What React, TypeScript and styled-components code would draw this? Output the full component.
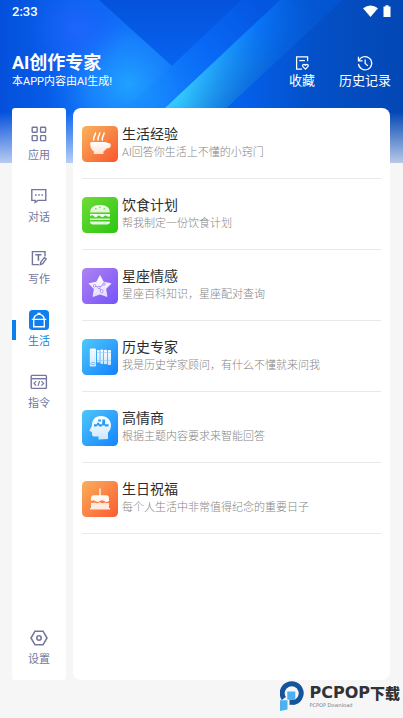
import React, { useState } from "react";
import styled, { createGlobalStyle } from "styled-components";

const GlobalStyle = createGlobalStyle`
  * { box-sizing: border-box; }
  body {
    margin: 0;
    background: #f6f6f7;
    font-family: Roboto, "Noto Sans CJK SC", sans-serif;
  }
  button { font: inherit; border: 0; padding: 0; background: none; cursor: pointer; }
`;

const Page = styled.div`
  position: relative;
  display: flex;
  flex-direction: column;
  min-height: 100vh;
`;

const Backdrop = styled.svg`
  position: absolute;
  inset: 0 0 auto 0;
  width: 100%;
  height: 163px;
  z-index: -1;
`;

const StatusBar = styled.div`
  display: flex;
  justify-content: space-between;
  align-items: center;
  height: 22px;
  padding: 0 12px;
  color: #fff;
  font-size: 13px;
  font-weight: 500;
`;

const StatusIcons = styled.div`
  display: flex;
  align-items: center;
  gap: 5px;
`;

const Header = styled.header`
  display: flex;
  justify-content: space-between;
  align-items: flex-end;
  height: 86px;
  padding: 0 12px 17px;
  color: #fff;
`;

const Title = styled.h1`
  margin: 0;
  font-size: 18px;
  line-height: 20px;
  font-weight: 700;
`;

const Tagline = styled.p`
  margin: 0;
  font-size: 11px;
  line-height: 18px;
`;

const Actions = styled.div`
  display: flex;
  gap: 24px;
  padding-bottom: 1px;
`;

const ActionButton = styled.button`
  display: flex;
  flex-direction: column;
  align-items: center;
  color: #fff;
  font-size: 13px;
  line-height: 18px;
`;

const Main = styled.main`
  flex: 1;
  display: flex;
  gap: 7px;
  padding: 0 13px 0 12px;
`;

const Sidebar = styled.nav`
  display: flex;
  flex-direction: column;
  flex: 0 0 54px;
  padding: 5px 0 1px;
  border-radius: 3px;
  background: #fff;
`;

const Spacer = styled.div`
  flex: 1;
`;

const NavButton = styled.button<{ $active?: boolean }>`
  position: relative;
  display: flex;
  flex-direction: column;
  align-items: center;
  justify-content: center;
  gap: 4px;
  height: 62px;
  color: ${(p) => (p.$active ? "#1283ee" : "#74779b")};
  font-size: 11px;
  line-height: 16px;

  &::before {
    content: "";
    display: ${(p) => (p.$active ? "block" : "none")};
    position: absolute;
    left: 0;
    width: 4px;
    height: 20px;
    background: #0f7ff0;
  }
`;

const Card = styled.section`
  flex: 1;
  min-width: 0;
  padding: 0 9px;
  border-radius: 8px;
  background: #fff;
`;

const List = styled.ul`
  list-style: none;
  margin: 0;
  padding: 0;
`;

const Item = styled.li`
  border-bottom: 1px solid #e9e9eb;
`;

const ItemButton = styled.button`
  display: flex;
  align-items: center;
  gap: 4px;
  width: 100%;
  height: 70px;
  padding-top: 2px;
  text-align: left;
`;

const Texts = styled.span`
  display: flex;
  flex-direction: column;
  gap: 1px;
  min-width: 0;
  padding-bottom: 3px;
`;

const ItemTitle = styled.span`
  font-size: 14px;
  line-height: 20px;
  color: #2c2c2c;
`;

const ItemNote = styled.span`
  font-size: 11px;
  line-height: 16px;
  font-weight: 300;
  color: #858585;
`;

const Footer = styled.footer`
  display: flex;
  justify-content: flex-end;
  align-items: center;
  gap: 2px;
  height: 38px;
  padding: 0 3px 6px 0;
`;

const Brand = styled.div`
  display: flex;
  flex-direction: column;
`;

const BrandName = styled.span`
  display: flex;
  align-items: center;
  color: #303236;
  font: 700 16px/18px "DejaVu Sans", sans-serif;
`;

const BrandHan = styled.span`
  font: 900 15px/18px "Noto Sans CJK SC", sans-serif;
`;

const BrandNote = styled.span`
  color: #77797d;
  font: 5px/6px "DejaVu Sans", sans-serif;
`;

const HeaderArt = () => (
  <Backdrop viewBox="0 0 403 163" preserveAspectRatio="none" aria-hidden="true">
    <defs>
      <linearGradient id="base" x1="0" y1="0" x2="1" y2="0">
        <stop offset="0" stopColor="#0450dc" />
        <stop offset=".3" stopColor="#0a6df5" />
        <stop offset=".6" stopColor="#0560ea" />
        <stop offset=".78" stopColor="#0350c8" />
        <stop offset="1" stopColor="#0347b4" />
      </linearGradient>
      <radialGradient id="glow" gradientUnits="userSpaceOnUse" cx="128" cy="84" r="88">
        <stop offset="0" stopColor="#20a2ff" />
        <stop offset=".5" stopColor="#1c86ff" stopOpacity=".75" />
        <stop offset="1" stopColor="#0a60f0" stopOpacity="0" />
      </radialGradient>
      <radialGradient id="violet" gradientUnits="userSpaceOnUse" cx="76" cy="28" r="50">
        <stop offset="0" stopColor="#2366ff" stopOpacity=".8" />
        <stop offset="1" stopColor="#2060ff" stopOpacity="0" />
      </radialGradient>
      <linearGradient id="wedge" x1="0" y1="0" x2="0" y2="1">
        <stop offset="0" stopColor="#0452dc" />
        <stop offset="1" stopColor="#0764f0" />
      </linearGradient>
      <linearGradient id="strip" gradientUnits="userSpaceOnUse" x1="260" y1="0" x2="150" y2="100">
        <stop offset="0" stopColor="#0455df" />
        <stop offset=".5" stopColor="#0869f6" />
        <stop offset="1" stopColor="#148cff" stopOpacity=".4" />
      </linearGradient>
      <linearGradient id="beam" gradientUnits="userSpaceOnUse" x1="310" y1="0" x2="190" y2="110">
        <stop offset="0" stopColor="#0358d8" />
        <stop offset=".35" stopColor="#0a78fa" />
        <stop offset="1" stopColor="#35ccff" />
      </linearGradient>
      <linearGradient id="beamEdge" gradientUnits="userSpaceOnUse" x1="225" y1="50" x2="262" y2="88">
        <stop offset="0" stopColor="#0450c8" stopOpacity="0" />
        <stop offset="1" stopColor="#0452cc" stopOpacity=".75" />
      </linearGradient>
      <linearGradient id="fade" x1="0" y1="0" x2="0" y2="1">
        <stop offset="0" stopColor="#f6f6f7" stopOpacity="0" />
        <stop offset="1" stopColor="#f6f6f7" stopOpacity=".74" />
      </linearGradient>
    </defs>
    <rect width="403" height="163" fill="url(#base)" />
    <rect width="260" height="163" fill="url(#glow)" />
    <rect width="140" height="90" fill="url(#violet)" />
    <path d="M99 0 172 66 242 0Z" fill="url(#wedge)" />
    <path d="M242 0h38L165 108 108 163V126Z" fill="url(#strip)" />
    <path d="M280 0h62L226 108l-58 55h-62l59-55Z" fill="url(#beam)" />
    <path d="M280 0h62L226 108l-58 55h-62l59-55Z" fill="url(#beamEdge)" />
    <rect y="112" width="403" height="51" fill="url(#fade)" />
  </Backdrop>
);

type IconProps = { children: React.ReactNode; size?: number };
const LineIcon = ({ children, size = 20 }: IconProps) => (
  <svg width={size} height={size} viewBox="0 0 20 20" fill="none" stroke="currentColor" strokeWidth="1.4" aria-hidden="true">
    {children}
  </svg>
);

const navItems = [
  {
    label: "应用",
    icon: (
      <LineIcon>
        <rect x="3.2" y="3.2" width="5" height="5" rx=".6" />
        <rect x="11.6" y="3.2" width="5" height="5" rx=".6" />
        <rect x="3.2" y="11.6" width="5" height="5" rx=".6" />
        <rect x="11.6" y="11.6" width="5" height="5" rx=".6" />
      </LineIcon>
    ),
  },
  {
    label: "对话",
    icon: (
      <LineIcon>
        <path d="M2.8 3.6h14v10.8h-8l-2.6 2v-2H2.8Z" />
        <path d="M6 9h1.6M9.2 9h1.6M12.4 9H14" strokeWidth="1.7" />
      </LineIcon>
    ),
  },
  {
    label: "写作",
    icon: (
      <LineIcon>
        <path d="M16 8.4V3.6H3.4v13H10" />
        <path d="M6.3 6.8h6.2M9.4 6.8v6" strokeWidth="1.6" />
        <path d="m11.8 14.2 3.5-4.6 1.9 1.4-3.5 4.7-2.4 1Z" />
      </LineIcon>
    ),
  },
  {
    label: "生活",
    icon: (
      <LineIcon>
        <rect width="20" height="20" rx="3.5" fill="#0f7ff0" stroke="none" />
        <path d="M4.8 9.4a5.2 5 0 0 1 10.4 0M2.8 9.4h14.400M4.700 9.400v7.400h10.600V9.400M8.400 3.400h3.200" stroke="#fff" />
      </LineIcon>
    ),
  },
  {
    label: "指令",
    icon: (
      <LineIcon>
        <rect x="2.2" y="3.4" width="15.2" height="13" rx=".8" />
        <path d="M2.2 6.7h15.2" />
        <path d="M7.2 9.2 5 11.4l2.2 2.2M12.4 9.2l2.2 2.2-2.2 2.2M10.5 9l-1.4 4.8" strokeWidth="1.2" />
      </LineIcon>
    ),
  },
];

type TileProps = { id: string; from: string; to: string; children: React.ReactNode };
const Tile = ({ id, from, to, children }: TileProps) => (
  <svg width="36" height="36" viewBox="0 0 36 36" aria-hidden="true">
    <defs>
      <linearGradient id={id} x1="0" y1="0" x2="1" y2="1">
        <stop offset="0" stopColor={from} />
        <stop offset="1" stopColor={to} />
      </linearGradient>
      <linearGradient id="shine" x1="0" y1="0" x2="0" y2="1">
        <stop offset="0" stopColor="#fff" />
        <stop offset="1" stopColor="#fff" stopOpacity=".76" />
      </linearGradient>
    </defs>
    <rect width="36" height="36" rx="4.5" fill={`url(#${id})`} />
    {children}
  </svg>
);

const topics = [
  {
    title: "生活经验",
    note: "AI回答你生活上不懂的小窍门",
    tile: (
      <Tile id="orange" from="#f9b45d" to="#f8562c">
        <path d="M8.2 17.2Q8.2 16 10 16h13q2 0 2.200 1 3.600-.6 3.600 2.300 0 3.300-4.400 3.300-1 2-3 3v2.500h-9.600v-2.500Q8.200 23 8.200 17.200Z" fill="url(#shine)" />
        <path d="M13.500 7q-.2 1.500-1.100 3.200T11.700 14M17.800 7q-.2 1.500-1.100 3.200T16 14M22.100 7q-.2 1.500-1.100 3.200T20.300 14" fill="none" stroke="#fff" strokeWidth="1.5" strokeLinecap="round" />
      </Tile>
    ),
  },
  {
    title: "饮食计划",
    note: "帮我制定一份饮食计划",
    tile: (
      <Tile id="green" from="#6fdc36" to="#2cc512">
        <path d="M8 15.500q0-7.500 10-7.500t10 7.500Z" fill="url(#shine)" />
        <path d="M8 17h20v2.200q-1.400 1.300-3 0t-3.200.2-3.300-.2-3.300.2-3.300-.2-3.900 0Z" fill="#fff" fillOpacity=".9" />
        <path d="M8 21.600h20V23H8ZM8 24.400h20q0 3-3 3H11q-3 0-3-3Z" fill="#fff" fillOpacity=".85" />
        <path d="M13 11.800h1.600M17 10.200h1.600M21.500 11.800h1.600" stroke="#58cf30" strokeWidth="1" />
      </Tile>
    ),
  },
  {
    title: "星座情感",
    note: "星座百科知识，星座配对查询",
    tile: (
      <Tile id="purple" from="#ae83f0" to="#7553fb">
        <path d="m18 7.500 3.500 6.600 7.500 1.500-5.300 5.400 1.300 7.500-7-2.400-7 2.400 1.300-7.500L7 15.600l7.500-1.500Z" fill="url(#shine)" stroke="#fff" strokeOpacity=".6" strokeLinejoin="round" />
        <g fill="#fff" stroke="#9a7bf4" strokeWidth=".8">
          <path d="m13 18 4 1.500 4.500-3M17 19.500l2.500 3.500" fill="none" />
          <circle cx="12.500" cy="17.800" r="1.200" />
          <circle cx="17" cy="19.500" r="1.200" />
          <circle cx="22" cy="16" r="1.200" />
          <circle cx="19.700" cy="23.200" r="1.400" />
        </g>
      </Tile>
    ),
  },
  {
    title: "历史专家",
    note: "我是历史学家顾问，有什么不懂就来问我",
    tile: (
      <Tile id="sky" from="#4fc9fb" to="#1580fb">
        <rect x="7.800" y="9.500" width="6.200" height="18" rx="1.200" fill="url(#shine)" />
        <ellipse cx="10.900" cy="24.500" rx="2.100" ry="1.200" fill="none" stroke="#62b5fb" strokeWidth=".8" />
        <path d="M9.300 11v11M12.300 11v11" stroke="#c7e6ff" strokeWidth=".5" />
        <g fill="url(#shine)">
          <rect x="15" y="11" width="2.700" height="12.500" rx=".8" />
          <rect x="18.400" y="10.400" width="2.900" height="14.500" rx=".8" />
          <rect x="22" y="10.800" width="3" height="14.500" rx=".8" />
          <rect x="25.700" y="11" width="3.300" height="15" rx=".8" />
        </g>
        <path d="M15 13.500h14M15 21.500h14" stroke="#8fcafd" strokeWidth=".6" />
      </Tile>
    ),
  },
  {
    title: "高情商",
    note: "根据主题内容要求来智能回答",
    tile: (
      <Tile id="blue" from="#4fc5fb" to="#1585fb">
        <path d="M19 6c6 0 10 4 10 9.500 0 3.500-1.600 5.500-3 7V29l-9.500.5V26.600H12q-2 0-2-2V22l-2.700-1.300 2.600-4.600C9.900 10 13 6 19 6Z" fill="url(#shine)" />
        <g fill="#279cf5">
          <path d="M12 14.200h3v-1.500h2.200v1.500h3v-1.500h2.800v1.500h3.500v2.300h-3.600v-1H20v1h-3v-1h-2.200v1H12Z" />
          <rect x="16.200" y="9.500" width="2.800" height="2" />
          <rect x="20.300" y="9.500" width="2.800" height="4" />
        </g>
      </Tile>
    ),
  },
  {
    title: "生日祝福",
    note: "每个人生活中非常值得纪念的重要日子",
    tile: (
      <Tile id="coral" from="#fbae5b" to="#fa5c31">
        <path d="M18 8v7.500" stroke="#fff" strokeWidth="1.3" strokeLinecap="round" />
        <path d="M9 17.600q0-3.300 3-3.300h12q3 0 3 3.300v2.400q-2.400 1.800-4.700 0-2.200-1.700-4.400 0-2.200 1.800-4.500.1T9 20Z" fill="#fff" fillOpacity=".95" />
        <path d="M9 22q2.200.2 3.700-.6 2.300 1.600 5.200-.1 2.800 1.900 5.200.2 1.700.7 3.900.5v5h1v1.500H8V27h1Z" fill="#fff" fillOpacity=".84" />
      </Tile>
    ),
  },
];

export default function App() {
  const [current, setCurrent] = useState("生活");

  return (
    <Page>
      <GlobalStyle />
      <HeaderArt />
      <StatusBar>
        <span>2:33</span>
        <StatusIcons>
          <svg width="15" height="12" viewBox="0 0 15 12" fill="#fff" aria-hidden="true">
            <path d="M0 3.300q7.500-5.600 15 0L7.500 12Z" />
          </svg>
          <svg width="8" height="12" viewBox="0 0 8 12" fill="#fff" aria-hidden="true">
            <path d="M.5 1.500h2V.3h3v1.200h2V12h-7Z" />
          </svg>
        </StatusIcons>
      </StatusBar>
      <Header>
        <div>
          <Title>AI创作专家</Title>
          <Tagline>本APP内容由AI生成!</Tagline>
        </div>
        <Actions>
          <ActionButton type="button">
            <LineIcon size={18}>
              <path d="M16.200 8V3.200H4v13.600h6" />
              <path d="M7 7.300h6.200" />
              <path d="M13.800 16.800 11 14.100q-.9-1.200.1-2.100 1.300-1 2.700.5 1.400-1.500 2.700-.5 1 .9.100 2.100Z" />
            </LineIcon>
            收藏
          </ActionButton>
          <ActionButton type="button">
            <LineIcon size={18}>
              <path d="M3.200 7.500a7.400 7.400 0 1 1-.5 3.500M2.700 3v4.700h4.600M10.200 6v4.600l3 2.600" />
            </LineIcon>
            历史记录
          </ActionButton>
        </Actions>
      </Header>
      <Main>
        <Sidebar>
          {navItems.map((item) => (
            <NavButton
              key={item.label}
              type="button"
              $active={item.label === current}
              onClick={() => setCurrent(item.label)}
            >
              {item.icon}
              {item.label}
            </NavButton>
          ))}
          <Spacer />
          <NavButton type="button">
            <LineIcon>
              <path d="M6 3.200h8L18 10l-4 6.800H6L2 10Z" strokeWidth="1.600" />
              <circle cx="10" cy="10" r="2.200" strokeWidth="1.600" />
            </LineIcon>
            设置
          </NavButton>
        </Sidebar>
        <Card>
          <List>
            {topics.map((topic) => (
              <Item key={topic.title}>
                <ItemButton type="button">
                  {topic.tile}
                  <Texts>
                    <ItemTitle>{topic.title}</ItemTitle>
                    <ItemNote>{topic.note}</ItemNote>
                  </Texts>
                </ItemButton>
              </Item>
            ))}
          </List>
        </Card>
      </Main>
      <Footer>
        <svg width="27" height="30" viewBox="0 0 27 30" aria-hidden="true">
          <path d="M3.800 17.500A9.500 9.500 0 1 1 13.200 21.600" fill="none" stroke="#14549b" strokeWidth="5" />
          <path d="M9.500 18.500h5v5.300h-5Z" fill="#14549b" />
          <path d="M7.300 10.500h8v8.200h-8Z" fill="#4cb1ee" />
          <path d="M0 19.200h7.500V28.500L0 30Z" fill="#4cb1ee" />
        </svg>
        <Brand>
          <BrandName>
            PCPOP<BrandHan>下载</BrandHan>
          </BrandName>
          <BrandNote>PCPOP Download</BrandNote>
        </Brand>
      </Footer>
    </Page>
  );
}
